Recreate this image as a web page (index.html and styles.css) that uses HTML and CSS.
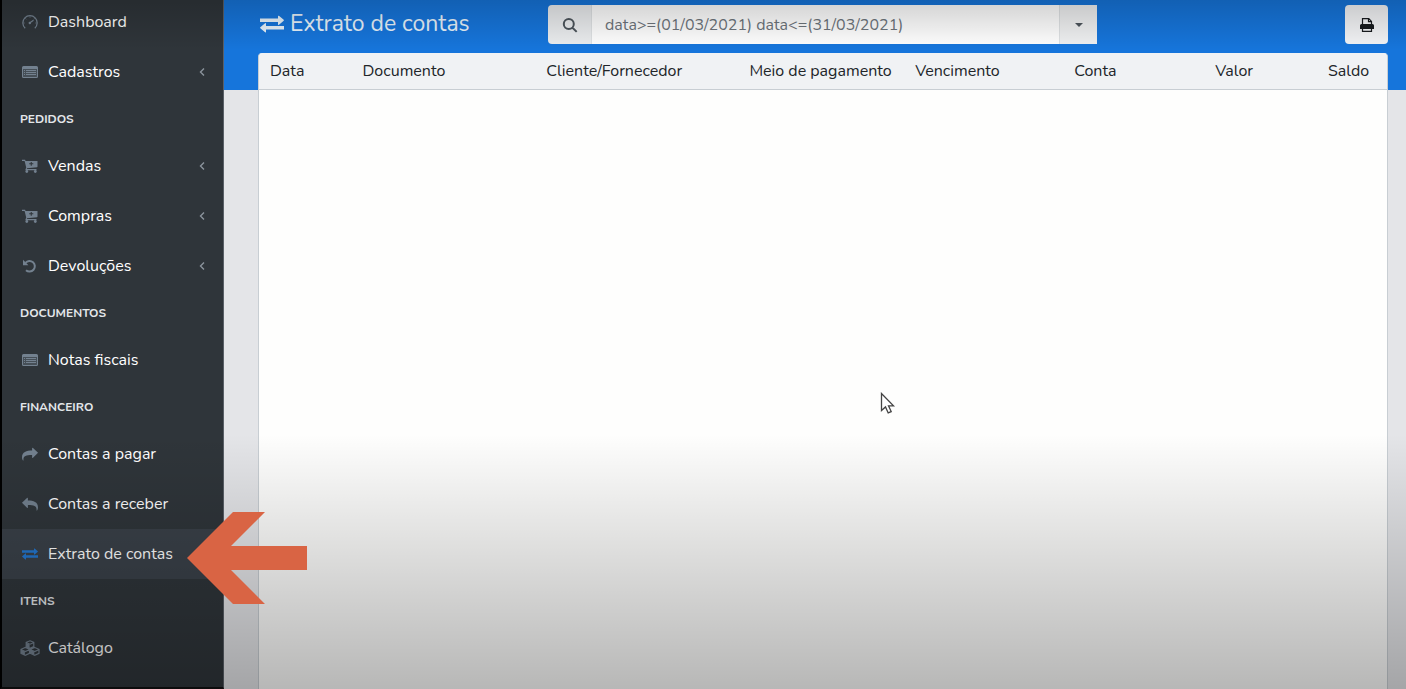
FILE: index.html
```html
<!DOCTYPE html>
<html lang="pt-BR">
<head>
    <meta charset="UTF-8">
    <meta name="viewport" content="width=device-width, initial-scale=1.0">
    <title>Extrato de contas</title>
    <link rel="stylesheet" href="styles.css">
</head>
<body>

    <!-- Shared icons -->
    <svg class="icon-defs" aria-hidden="true">
        <symbol id="icon-list" viewBox="0 0 16 14">
            <path fill-rule="evenodd" d="M1.500 1h13A1.500 1.500 0 0 1 16 2.500v9a1.500 1.500 0 0 1-1.500 1.500h-13A1.500 1.500 0 0 1 0 11.500v-9A1.500 1.500 0 0 1 1.500 1zM1 4v7.500c0 .3.200.5.500.5h13c.3 0 .5-.2.500-.5V4z"/>
            <path d="M1 4h14v8H1z" opacity=".35"/>
            <path d="M2 5h1v1H2zM4 5h10v1H4zM2 7h1v1H2zM4 7h10v1H4zM2 9h1v1H2zM4 9h10v1H4z"/>
        </symbol>
        <symbol id="icon-cart" viewBox="0 0 16 14">
            <path fill-rule="evenodd" d="M0 .8h2.700c.5 0 .7.300.8 1.200H15.500v5.500c0 .4-.2.600-.6.700L5 9.200l-.2.800H14.500v1.200H4c-.5 0-.7-.4-.5-.8L4.200 8.500 2.600 2H0zM8.700 3v1.300H7.200v1h1.500v1.400h1.100V5.300h1.500v-1H9.800V3z"/>
            <circle cx="4.800" cy="12.500" r="1.400"/>
            <circle cx="13.300" cy="12.500" r="1.400"/>
        </symbol>
        <symbol id="icon-exchange" viewBox="0 0 24 18">
            <path d="M0 3.500h18V1.200c0-.5.500-.7.900-.4l4.800 4c.3.300.3.600 0 .9L19 9.800c-.4.300-1 .1-1-.4V7H0zM24 11H6V8.600c0-.5-.5-.8-.9-.4L.3 12.300c-.3.300-.3.600 0 .9l4.800 4.100c.4.300.9.100.9-.4v-2.400h18z"/>
        </symbol>
        <symbol id="icon-angle" viewBox="0 0 6 10">
            <path d="M5 1.500 1.500 5 5 8.500" fill="none" stroke="currentColor" stroke-width="1.400"/>
        </symbol>
        <symbol id="icon-share" viewBox="0 0 16 14">
            <path d="M15.800 5.400 11 1c-.4-.3-.9-.1-.9.400v2.200C4.500 3.600 0 5 0 10.400c0 1 .3 2 .8 2.900.3.500.8.400.7-.2-.5-3.800 2-5.200 8.600-5.200v2.500c0 .5.500.7.900.4l4.800-4.700c.3-.2.300-.5 0-.7z"/>
        </symbol>
    </svg>

    <div class="page">

        <!-- Sidebar -->
        <aside class="sidebar">
            <nav class="menu">
                <a class="menu-item" href="#">
                    <svg class="menu-icon" viewBox="0 0 16 14" aria-hidden="true">
                        <path d="M3.200 13.200a7.200 7.200 0 1 1 9.600 0M7.500 8 11.500 5.200" fill="none" stroke="currentColor" stroke-width="1.200"/>
                        <path d="M1.500 8h1M13.500 8h1M8 1.500v1M3.500 3.500l.7.700M12.500 3.500l-.7.700" fill="none" stroke="currentColor"/>
                        <circle cx="7.800" cy="8" r="1.200"/>
                    </svg>
                    <span>Dashboard</span>
                </a>
                <a class="menu-item" href="#">
                    <svg class="menu-icon" aria-hidden="true"><use href="#icon-list"/></svg>
                    <span>Cadastros</span>
                    <svg class="menu-arrow" aria-hidden="true"><use href="#icon-angle"/></svg>
                </a>

                <h2 class="menu-title">PEDIDOS</h2>
                <a class="menu-item" href="#">
                    <svg class="menu-icon" aria-hidden="true"><use href="#icon-cart"/></svg>
                    <span>Vendas</span>
                    <svg class="menu-arrow" aria-hidden="true"><use href="#icon-angle"/></svg>
                </a>
                <a class="menu-item" href="#">
                    <svg class="menu-icon" aria-hidden="true"><use href="#icon-cart"/></svg>
                    <span>Compras</span>
                    <svg class="menu-arrow" aria-hidden="true"><use href="#icon-angle"/></svg>
                </a>
                <a class="menu-item" href="#">
                    <svg class="menu-icon" viewBox="0 0 16 14" aria-hidden="true">
                        <path d="M3.500 3.800A5.300 5.300 0 1 1 4 11.200" fill="none" stroke="currentColor" stroke-width="2"/>
                        <path d="M1 .8v5.400h5.400z"/>
                    </svg>
                    <span>Devoluções</span>
                    <svg class="menu-arrow" aria-hidden="true"><use href="#icon-angle"/></svg>
                </a>

                <h2 class="menu-title">DOCUMENTOS</h2>
                <a class="menu-item" href="#">
                    <svg class="menu-icon" aria-hidden="true"><use href="#icon-list"/></svg>
                    <span>Notas fiscais</span>
                </a>

                <h2 class="menu-title">FINANCEIRO</h2>
                <a class="menu-item" href="#">
                    <svg class="menu-icon" aria-hidden="true"><use href="#icon-share"/></svg>
                    <span>Contas a pagar</span>
                </a>
                <a class="menu-item" href="#">
                    <svg class="menu-icon flip" aria-hidden="true"><use href="#icon-share"/></svg>
                    <span>Contas a receber</span>
                </a>
                <a class="menu-item active" href="#">
                    <svg class="menu-icon" aria-hidden="true"><use href="#icon-exchange"/></svg>
                    <span>Extrato de contas</span>
                </a>

                <h2 class="menu-title">ITENS</h2>
                <a class="menu-item" href="#">
                    <svg class="menu-icon wide" viewBox="0 0 20 16" aria-hidden="true">
                        <path d="M10 .8 13.800 2.300v4.200L10 8.300 6.200 6.500V2.300zM5.300 7.500 9.500 9.300v4L5.300 15.300 1 13.300v-4zM14.700 7.500 19 9.300v4l-4.300 2-4.200-2v-4zM6.500 2.800 10 4.200 13.500 2.800M1.400 9.800l3.900 1.700 3.900-1.700M10.800 9.800l3.900 1.700 3.900-1.700" fill="none" stroke="currentColor" stroke-width="1.200"/>
                        <path d="M6.200 3 9.600 4.400v3.700L6.200 6.500zM1 9.800l3.900 1.700v3.600L1 13.300zM10.500 9.800l3.800 1.700v3.600l-3.800-1.800z"/>
                    </svg>
                    <span>Catálogo</span>
                </a>
            </nav>
        </aside>

        <!-- Content -->
        <main class="content">
            <header class="toolbar">
                <h1 class="title">
                    <svg class="title-icon" aria-hidden="true"><use href="#icon-exchange"/></svg>
                    Extrato de contas
                </h1>
                <form class="search">
                    <button class="search-button" type="button" aria-label="Pesquisar">
                        <svg width="16" height="16" viewBox="0 0 16 16" aria-hidden="true">
                            <path d="M6.800 2a5 5 0 1 0 0 10 5 5 0 0 0 0-10zM10.500 10.700l4.200 4.200" fill="none" stroke="currentColor" stroke-width="2"/>
                        </svg>
                    </button>
                    <input class="search-input" type="text" aria-label="Filtro" value="data&gt;=(01/03/2021) data&lt;=(31/03/2021)">
                    <button class="search-toggle" type="button" aria-label="Mais filtros">
                        <svg width="8" height="4" viewBox="0 0 8 4" aria-hidden="true"><path d="M0 0h8L4 4z"/></svg>
                    </button>
                </form>
                <button class="print" type="button" aria-label="Imprimir">
                    <svg width="16" height="16" viewBox="0 0 16 16" aria-hidden="true">
                        <path d="M3.500 8V1.700h6.300l2.700 2.700V8M9.500 1.700v3h3M3.500 11v3.300h9V11" fill="none" stroke="currentColor" stroke-width="1.200"/>
                        <path d="M2.500 7h11A1.500 1.500 0 0 1 15 8.500V12H1V8.500A1.500 1.500 0 0 1 2.500 7z"/>
                    </svg>
                </button>
            </header>

            <div class="card">
                <table class="statement">
                    <thead>
                        <tr>
                            <th class="col-date">Data</th>
                            <th class="col-document">Documento</th>
                            <th class="col-client">Cliente/Fornecedor</th>
                            <th class="col-payment">Meio de pagamento</th>
                            <th class="col-due">Vencimento</th>
                            <th class="col-account">Conta</th>
                            <th class="col-value">Valor</th>
                            <th class="col-balance">Saldo</th>
                        </tr>
                    </thead>
                    <tbody></tbody>
                </table>
            </div>
        </main>
    </div>

    <!-- Pointer, shading and callout arrow over the page -->
    <svg class="pointer" width="16" height="24" viewBox="0 0 16 24" aria-hidden="true">
        <path d="M1.500 1.500v17l4-3.600 2.700 6 3-1.300-2.700-5.800h5z" fill="#fff" stroke="#444" stroke-width="1.300"/>
    </svg>
    <div class="shade"></div>
    <svg class="callout" width="120" height="92" viewBox="0 0 120 92" aria-hidden="true">
        <path d="M0 46 46 0h32L44 34h76v24H44l34 34H46z"/>
    </svg>

</body>
</html>
```
FILE: styles.css
```css
* {
    box-sizing: border-box;
}
body {
    margin: 0;
    font-family: Nunito, Lato, sans-serif;
    font-size: 16px;
    line-height: 20px;
    color: #212529;
    position: relative;
    overflow: hidden;
}
svg {
    fill: currentColor;
}
button {
    font: inherit;
    border: 0;
    padding: 0;
    display: flex;
    align-items: center;
    justify-content: center;
    cursor: pointer;
}
.icon-defs {
    position: absolute;
    width: 0;
    height: 0;
}
.page {
    display: flex;
    height: 100vh;
}

/* Sidebar */
.sidebar {
    flex: 0 0 224px;
    overflow: hidden;
    background-color: #2f353a;
    border-left: 2px solid #000;
    border-right: 1px solid #5a6067;
    border-bottom: 2px solid #111;
}
.menu {
    margin-top: -3px;
}
.menu-item {
    display: flex;
    align-items: center;
    height: 50px;
    padding: 0 18px 0 20px;
    color: #fff;
    text-decoration: none;
}
.menu-item.active {
    background-color: #3a4149;
}
.menu-icon {
    width: 16px;
    height: 14px;
    margin-right: 10px;
    color: #73818f;
}
.menu-icon.wide {
    width: 20px;
    height: 16px;
    margin: 0 8px 0 -2px;
}
.menu-icon.flip {
    transform: scaleX(-1);
}
.active .menu-icon {
    color: #2377d0;
}
.menu-arrow {
    width: 6px;
    height: 10px;
    margin-left: auto;
    color: #8b949d;
}
.menu-title {
    margin: 0;
    padding: 0 18px;
    font-size: 12px;
    font-weight: 700;
    line-height: 44px;
    color: #e4e7ea;
}

/* Content */
.content {
    flex: 1;
    min-width: 0;
    display: flex;
    flex-direction: column;
    padding: 5px 18px 0 34px;
    background: linear-gradient(#1675db 90px, #e4e5e8 90px);
}
.toolbar {
    display: grid;
    grid-template-columns: 290px minmax(0, 549px) 1fr;
    height: 39px;
    margin-bottom: 9px;
}
.title {
    display: flex;
    align-items: center;
    margin: 0;
    padding: 0 0 2px 2px;
    font-size: 23px;
    font-weight: 400;
    color: #e8f3fb;
}
.title-icon {
    width: 24px;
    height: 18px;
    margin-right: 6px;
}
.search {
    display: flex;
    border-radius: 4px 0 0 4px;
    overflow: hidden;
}
.search-button {
    width: 44px;
    background-color: #ebedef;
    border-right: 1px solid #dfe2e4;
    color: #4d555c;
}
.search-input {
    flex: 1;
    min-width: 0;
    border: 0;
    padding: 0 13px;
    background-color: #fff;
    font: inherit;
    color: #6d747b;
}
.search-toggle {
    width: 38px;
    background-color: #f0f1f2;
    border-left: 1px solid #dfe2e4;
    color: #4d555c;
}
.print {
    justify-self: end;
    width: 43px;
    border-radius: 4px;
    background-color: #f3f4f6;
    color: #181b1e;
}
.card {
    flex: 1;
    border: 1px solid #c8ced3;
    border-top-color: #f0f2f4;
    border-bottom: 0;
    border-radius: 4px 4px 0 0;
    background-color: #fefefd;
    overflow: hidden;
}
.statement {
    width: 100%;
    table-layout: fixed;
    border-collapse: collapse;
}
.statement th {
    height: 35px;
    padding: 0 0 0 11px;
    border-bottom: 1px solid #c8ced3;
    background-color: #f0f2f4;
    font-weight: 400;
    text-align: left;
    white-space: nowrap;
}
.col-date {
    width: 8.2%;
}
.col-document {
    width: 16.3%;
}
.col-client {
    width: 18%;
}
.col-payment {
    width: 14.7%;
}
.col-due {
    width: 14.1%;
}
.col-account {
    width: 12.5%;
}
.col-value {
    width: 10%;
}

/* Overlays */
.pointer {
    position: absolute;
    left: 880px;
    top: 392px;
}
.shade {
    position: absolute;
    inset: 0;
    pointer-events: none;
    background: linear-gradient(rgba(0, 0, 0, 0.18), rgba(0, 0, 0, 0) 50px, rgba(0, 0, 0, 0) 63%, rgba(0, 0, 0, 0.28));
}
.callout {
    position: absolute;
    left: 187px;
    top: 512px;
    color: #d96444;
}
```
